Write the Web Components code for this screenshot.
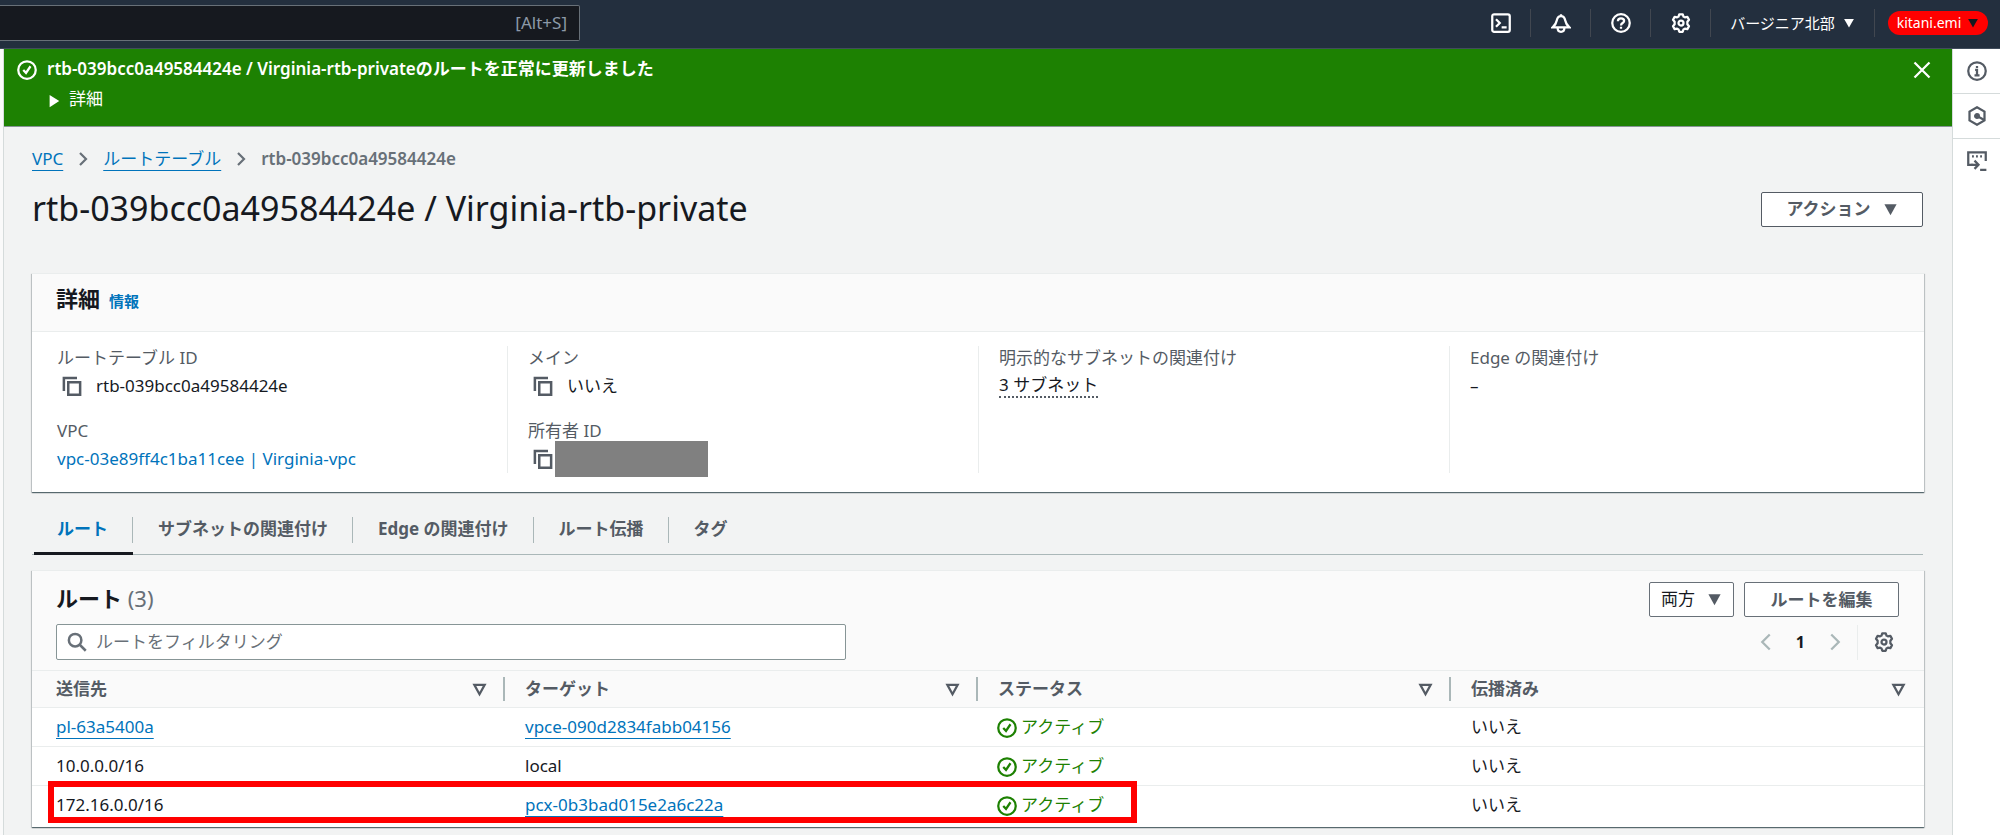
<!DOCTYPE html>
<html lang="ja">
<head>
<meta charset="utf-8">
<meta name="viewport" content="width=device-width, initial-scale=1">
<title>rtb-039bcc0a49584424e | VPC</title>
<style>
html, body { margin: 0; }
body {
  font-family: "Noto Sans", "Noto Sans CJK JP", sans-serif;
  font-size: 17px; line-height: 24px; color: #16191f; background: #f2f3f3;
  --link: #0073bb; --muted: #545b64; --line: #eaeded; --grey: #687078; --green: #1d8102;
}
</style>
</head>
<body>
<console-page>
  <top-bar slot="top"></top-bar>
  <flash-bar>
    rtb-039bcc0a49584424e / Virginia-rtb-privateのルートを正常に更新しました
    <span slot="more">詳細</span>
  </flash-bar>
  <crumb-trail></crumb-trail>
  <page-heading>rtb-039bcc0a49584424e / Virginia-rtb-private</page-heading>
  <detail-card></detail-card>
  <tab-strip></tab-strip>
  <route-card></route-card>
  <side-tools slot="side"></side-tools>
</console-page>

<script>
const BASE = `:host, *, *::before { box-sizing: border-box; }
a { color: var(--link); }
button, input, select { font: inherit; color: inherit; margin: 0; }
button { background: none; border: 0; padding: 0; cursor: pointer; display: flex; align-items: center; justify-content: center; }
h1, h2, p, dl { margin: 0; }
`;

function define(name, css, html) {
  const tpl = document.createElement('template');
  tpl.innerHTML = `<style>${BASE}${css}</style>${html}`;
  customElements.define(name, class extends HTMLElement {
    constructor() {
      super();
      this.attachShadow({ mode: 'open' }).append(tpl.content.cloneNode(true));
    }
  });
}

const ICONS = {
  shell: '<rect x="1" y="1" width="14" height="14" rx="1.5"/><path d="M4 5l3 3-3 3M8.5 11.5h4"/>',
  bell: '<path d="M8 1v1.5M8 2.500c-2 0-3 1.500-3.400 3.500C4.200 8.500 3.500 9.500 1.300 11.500h13.400C12.500 9.500 11.800 8.500 11.400 6 11 4 10 2.500 8 2.500zM5.300 12c0 2 1.200 3 2.700 3s2.700-1 2.700-3"/>',
  help: '<circle cx="8" cy="8" r="7"/><path d="M5.500 6.500C5.500 5 6.500 4.200 8 4.200s2.500.8 2.500 2.100C10.500 8 8 8 8 9.900M8 11v1.500"/>',
  gear: '<path stroke-linejoin="round" d="M6.600 1h2.800l.6 1.900 1.100.6 2-.4 1.300 2.300L13.100 7v2l1.300 1.600-1.300 2.300-2-.4-1.100.6-.6 1.900H6.600L6 13.100l-1.100-.6-2 .4-1.300-2.300L2.900 9V7L1.600 5.400l1.300-2.300 2 .4L6 2.900z"/><circle cx="8" cy="8" r="2"/>',
  check: '<circle cx="8" cy="8" r="7"/><path d="M5 8l2.200 2.300L10.800 5"/>',
  close: '<path d="M2 2l12 12M14 2L2 14"/>',
  info: '<circle cx="8" cy="8" r="7"/><path d="M6.500 7H8v4.500M6 11.500h4M8 4v1.500"/>',
  hex: '<path d="M8 1l6 3.500v7L8 15l-6-3.500v-7z"/><circle cx="8" cy="8" r="1.500" fill="currentColor"/><path d="M8 8l5.500 3"/>',
  feed: '<path d="M5 11H1V1h14v7"/><path d="M4 4.200h1.500M7.200 4.200h1.500M10.500 4.200H12M3 11h5.500M6 7.700L9.200 11 6 14.300M10.500 15H15.500"/>',
  copy: '<path d="M1.500 12V1.500H12"/><rect x="5" y="5" width="9.500" height="10"/>',
  search: '<circle cx="6.500" cy="6.500" r="5"/><path d="M10.200 10.200l4.800 4.800"/>',
  right: '<path d="M5 2l6 6-6 6"/>',
  left: '<path d="M11 2L5 8l6 6"/>',
  down: '<path fill="currentColor" stroke="none" d="M1.500 2.500h13L8 14z"/>',
  play: '<path fill="currentColor" stroke="none" d="M3 1l11 7-11 7z"/>',
  sort: '<path d="M2.500 3h11L8 13z"/>'
};
customElements.define('ui-icon', class extends HTMLElement {
  constructor() { super(); this.attachShadow({ mode: 'open' }); }
  connectedCallback() {
    this.shadowRoot.innerHTML = `<style>:host { display: inline-flex; flex: none; width: 20px; height: 20px; } svg { width: 100%; height: 100%; display: block; }</style>
      <svg viewBox="0 0 16 16" fill="none" stroke="currentColor" stroke-width="${this.getAttribute('weight') || 1.8}" aria-hidden="true">${ICONS[this.getAttribute('name')]}</svg>`;
  }
});

define('console-page', `
  :host { display: flex; flex-direction: column; min-height: 100vh; }
  .body { flex: 1; display: flex; }
  .rail { width: 4px; background: #fafafa; border-right: 1px solid #d5dbdb; }
  main { flex: 1; min-width: 0; border-right: 1px solid #d5dbdb; padding-bottom: 8px; }
`, `<slot name="top"></slot><div class="body"><div class="rail"></div><main><slot></slot></main><slot name="side"></slot></div>`);

define('top-bar', `
  :host { display: flex; align-items: center; justify-content: space-between; height: 49px; background: #232f3e; color: #fff; border-bottom: 1px solid #414d5c; }
  .search { flex: 0 0 29%; height: 36px; margin-bottom: 2px; display: flex; align-items: center; background: #16191f; border: 1px solid #687078; border-left: 0; border-radius: 0 2px 2px 0; padding-right: 12px; color: #8d99a8; }
  .search input { flex: 1; min-width: 0; border: 0; background: none; outline: 0; }
  nav { display: flex; align-items: center; margin-bottom: 2px; padding-right: 12px; }
  button { height: 28px; }
  .tool { width: 60px; border-right: 1px solid #414750; }
  .region { width: 164px; gap: 8px; font-size: 15px; border-right: 1px solid #414750; }
  .user { margin-left: 13px; width: 100px; height: 24px; border-radius: 12px; background: red; gap: 6px; font-size: 14px; }
  .small { width: 12px; height: 12px; }
  .user .small { color: #16191f; }
`, `<label class="search"><input type="text" aria-label="検索"><span>[Alt+S]</span></label>
<nav>
  <button class="tool" aria-label="CloudShell"><ui-icon name="shell"></ui-icon></button>
  <button class="tool" aria-label="通知"><ui-icon name="bell"></ui-icon></button>
  <button class="tool" aria-label="ヘルプ"><ui-icon name="help"></ui-icon></button>
  <button class="tool" aria-label="設定"><ui-icon name="gear"></ui-icon></button>
  <button class="region">バージニア北部<ui-icon class="small" name="down"></ui-icon></button>
  <button class="user">kitani.emi<ui-icon class="small" name="down"></ui-icon></button>
</nav>`);

define('flash-bar', `
  :host { display: flex; align-items: flex-start; min-height: 78px; background: var(--green); color: #fff; padding: 8px 20px 8px 13px; border-bottom: 1px solid #879596; }
  .text { flex: 1; margin-left: 10px; }
  p { font-weight: 600; }
  ui-icon { margin-top: 3px; }
  .more { margin-top: 6px; gap: 8px; }
  .more ui-icon { width: 14px; height: 14px; }
`, `<ui-icon name="check"></ui-icon><div class="text"><p><slot></slot></p><button class="more" aria-expanded="false"><ui-icon name="play"></ui-icon><slot name="more"></slot></button></div>
<button aria-label="閉じる"><ui-icon name="close"></ui-icon></button>`);

define('crumb-trail', `
  :host { display: block; padding: 20px 28px 0; }
  nav { display: flex; align-items: center; gap: 12px; color: var(--grey); }
  a { text-underline-offset: 5px; }
  ui-icon { width: 16px; height: 16px; }
  b { font-weight: 600; }
`, `<nav aria-label="パンくずリスト"><a href="#vpc">VPC</a><ui-icon name="right" weight="2.2"></ui-icon><a href="#tables">ルートテーブル</a><ui-icon name="right" weight="2.2"></ui-icon><b>rtb-039bcc0a49584424e</b></nav>`);

define('page-heading', `
  :host { display: flex; justify-content: space-between; align-items: center; padding: 14px 29px 0 28px; }
  h1 { font-size: 34px; line-height: 46px; padding-bottom: 2px; font-weight: 400; }
  button { width: 162px; height: 35px; gap: 12px; background: #fff; border: 1px solid var(--muted); border-radius: 2px; color: var(--muted); font-weight: 700; }
  ui-icon { width: 15px; height: 15px; }
`, `<h1><slot></slot></h1><button>アクション<ui-icon name="down"></ui-icon></button>`);

define('panel-card', `
  :host { display: block; margin: 0 28px; background: #fff; border-top: 1px solid var(--line); box-shadow: 0 1px 1px rgba(0,28,36,.5), 1px 1px 1px rgba(0,28,36,.15), -1px 1px 1px rgba(0,28,36,.15); }
  header { background: #fafafa; border-bottom: 1px solid var(--line); }
`, `<header><slot name="head"></slot></header><slot></slot>`);

define('field-pair', `
  :host { display: block; height: 73px; }
  dt { color: var(--muted); line-height: 24px; }
  dd { margin: 0; display: flex; align-items: center; gap: 14px; height: 32px; }
  ui-icon { margin-left: 5px; color: var(--muted); }
  :host(:not([copy])) ui-icon { display: none; }
`, `<dl><dt><slot name="label"></slot></dt><dd><ui-icon name="copy" weight="2"></ui-icon><slot></slot></dd></dl>`);

define('detail-card', `
  :host { display: block; margin-top: 40px; }
  .head { display: flex; align-items: baseline; gap: 9px; padding: 8px 24px 17px; }
  h2 { font-size: 22px; line-height: 32px; font-weight: 700; }
  .head a { font-size: 15px; font-weight: 700; text-decoration: none; }
  .cols { display: grid; grid-template-columns: repeat(4, 1fr); padding: 14px 4px 19px; }
  .cols > div { padding: 0 20px; height: 127px; border-left: 1px solid var(--line); }
  .cols > div:first-child { border-color: transparent; }
  .plain { text-decoration: none; }
  .popover { border-bottom: 2px dotted var(--muted); line-height: 22px; }
  .mask { width: 153px; height: 36px; background: #808080; margin-left: -12px; }
`, `<panel-card>
  <div class="head" slot="head"><h2>詳細</h2><a href="#info">情報</a></div>
  <div class="cols">
    <div><field-pair copy><span slot="label">ルートテーブル ID</span>rtb-039bcc0a49584424e</field-pair>
      <field-pair><span slot="label">VPC</span><a class="plain" href="#vpc">vpc-03e89ff4c1ba11cee | Virginia-vpc</a></field-pair></div>
    <div><field-pair copy><span slot="label">メイン</span>いいえ</field-pair>
      <field-pair copy><span slot="label">所有者 ID</span><span class="mask"></span></field-pair></div>
    <div><field-pair><span slot="label">明示的なサブネットの関連付け</span><span class="popover">3 サブネット</span></field-pair></div>
    <div><field-pair><span slot="label">Edge の関連付け</span>–</field-pair></div>
  </div></panel-card>`);

define('tab-strip', `
  :host { display: block; margin: 15px 29px 0 28px; border-bottom: 1px solid #aab7b8; }
  div { display: flex; padding-left: 2px; }
  button { height: 48px; padding: 0 25px 2px; position: relative; color: var(--muted); font-weight: 700; margin-bottom: -1px; border-bottom: 3px solid transparent; }
  button:first-child { padding-left: 23px; color: var(--link); border-color: #16191f; }
  button:not(:last-child)::before { content: ""; position: absolute; right: 0; top: 10px; height: 26px; border-right: 1px solid #aab7b8; }
`, `<div role="tablist"><button role="tab" aria-selected="true">ルート</button><button role="tab">サブネットの関連付け</button><button role="tab">Edge の関連付け</button><button role="tab">ルート伝播</button><button role="tab">タグ</button></div>`);

define('state-label', `
  :host { display: inline-flex; align-items: center; gap: 4px; color: var(--green); vertical-align: top; }
  ui-icon { margin: 2px 0 0 -1px; }
`, `<ui-icon name="check"></ui-icon><slot></slot>`);

define('route-card', `
  :host { display: block; margin-top: 15px; }
  .head { display: grid; grid-template-columns: 1fr auto; row-gap: 7px; padding: 11px 25px 10px 24px; }
  h2 { font-size: 22px; line-height: 32px; font-weight: 700; }
  h2 span { font-weight: 400; color: var(--grey); }
  .actions, .pages { display: flex; align-items: center; justify-content: flex-end; }
  .actions { gap: 10px; color: var(--muted); }
  .pick { position: relative; color: #16191f; }
  select { display: block; appearance: none; width: 85px; height: 35px; padding: 0 11px 2px; background: #fff; border: 1px solid var(--grey); border-radius: 2px; }
  .pick ui-icon { position: absolute; right: 12px; top: 10px; width: 15px; height: 15px; color: var(--muted); pointer-events: none; }
  .actions button { width: 155px; height: 35px; background: #fff; border: 1px solid var(--grey); border-radius: 2px; font-weight: 700; }
  .filter { display: flex; align-items: center; gap: 9px; width: 50%; min-width: 320px; max-width: 790px; height: 36px; padding: 0 10px; background: #fff; border: 1px solid #879596; border-radius: 2px; color: var(--grey); }
  .filter input { flex: 1; min-width: 0; border: 0; outline: 0; background: none; padding: 0; }
  .filter input::placeholder { color: var(--grey); opacity: 1; }
  .pages { gap: 20px; color: #aab7b8; padding-right: 5px; }
  .pages b { color: #16191f; font-size: 16px; }
  .pages .set { height: 35px; color: var(--muted); border-left: 1px solid var(--line); padding-left: 16px; margin-left: -8px; }
  .wrap { position: relative; padding-bottom: 2px; }
  table { width: 100%; table-layout: fixed; border-collapse: separate; border-spacing: 0; }
  th, td { text-align: left; padding: 0 20px; }
  th:first-child, td:first-child { padding-left: 24px; }
  th { height: 37px; background: #fafafa; border-bottom: 1px solid var(--line); color: var(--muted); padding: 0; }
  th div { display: flex; align-items: center; justify-content: space-between; height: 24px; padding-right: 16px; border-right: 2px solid #aab7b8; }
  th ui-icon { width: 15px; height: 15px; }
  th:last-child div { border-color: transparent; }
  th:not(:first-child) div { padding-left: 20px; }
  td { height: 39px; padding-bottom: 1px; border-bottom: 1px solid var(--line); }
  tr:last-child td { border-color: transparent; }
  td a { text-underline-offset: 5px; }
  .mark { position: absolute; left: 16px; right: calc(42% - 8px); bottom: 4px; height: 42px; border: 6px solid red; pointer-events: none; }
`, `<panel-card>
  <div class="head" slot="head">
    <h2>ルート <span>(3)</span></h2>
    <div class="actions"><span class="pick"><select aria-label="ルートの表示"><option>両方</option></select><ui-icon name="down"></ui-icon></span><button>ルートを編集</button></div>
    <label class="filter"><ui-icon name="search" weight="2"></ui-icon><input type="text" placeholder="ルートをフィルタリング" aria-label="ルートをフィルタリング"></label>
    <div class="pages"><button aria-label="前へ"><ui-icon name="left"></ui-icon></button><b>1</b><button aria-label="次へ"><ui-icon name="right"></ui-icon></button><button class="set" aria-label="設定"><ui-icon name="gear"></ui-icon></button></div>
  </div>
  <div class="wrap"><table>
    <thead><tr><th><div>送信先<ui-icon name="sort" weight="2.4"></ui-icon></div></th><th><div>ターゲット<ui-icon name="sort" weight="2.4"></ui-icon></div></th><th><div>ステータス<ui-icon name="sort" weight="2.4"></ui-icon></div></th><th><div>伝播済み<ui-icon name="sort" weight="2.4"></ui-icon></div></th></tr></thead>
    <tbody>
      <tr><td><a href="#pl">pl-63a5400a</a></td><td><a href="#vpce">vpce-090d2834fabb04156</a></td><td><state-label>アクティブ</state-label></td><td>いいえ</td></tr>
      <tr><td>10.0.0.0/16</td><td>local</td><td><state-label>アクティブ</state-label></td><td>いいえ</td></tr>
      <tr><td>172.16.0.0/16</td><td><a href="#pcx">pcx-0b3bad015e2a6c22a</a></td><td><state-label>アクティブ</state-label></td><td>いいえ</td></tr>
    </tbody></table><div class="mark"></div></div>
</panel-card>`);

define('side-tools', `
  :host { display: block; width: 47px; background: #fff; color: var(--muted); }
  button { width: 100%; height: 45px; border-bottom: 1px solid #d5dbdb; }
  button:last-child { border-color: transparent; }
`, `<button aria-label="情報"><ui-icon name="info"></ui-icon></button><button aria-label="診断"><ui-icon name="hex"></ui-icon></button><button aria-label="チュートリアル"><ui-icon name="feed"></ui-icon></button>`);
</script>
</body>
</html>
